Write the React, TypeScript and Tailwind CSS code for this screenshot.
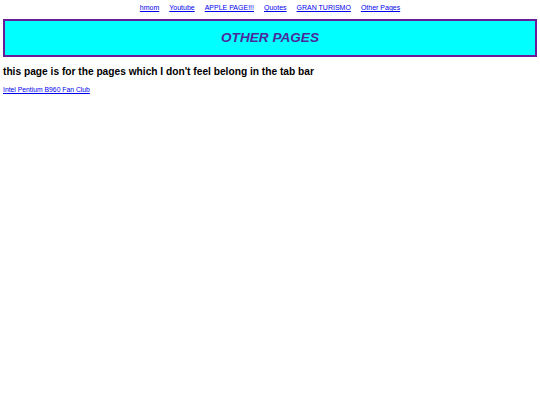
const navLinks = ["hmom", "Youtube", "APPLE PAGE!!!", "Quotes", "GRAN TURISMO", "Other Pages"]

export default function App() {
  return (
    <div className="min-h-screen bg-white text-black" style={{ fontFamily: '"Liberation Sans", Arial, sans-serif' }}>
      <nav className="flex justify-center gap-[10px] pt-[3px] text-[7px] leading-[10px]">
        {navLinks.map((link) => (
          <a key={link} href="#" className="text-[#0000ee] underline">
            {link}
          </a>
        ))}
      </nav>

      <div className="mx-[3px] mt-[6px] border-[2.5px] border-[#6a1b9a] bg-[#00ffff] h-[38px] flex items-center justify-center">
        <h1 className="text-[13.6px] font-bold italic text-[#4b2a9e]">OTHER PAGES</h1>
      </div>

      <h2 className="mx-[3px] mt-[8px] text-[10.2px] font-bold leading-[14px]">
        this page is for the pages which I don't feel belong in the tab bar
      </h2>

      <div className="mx-[3px] mt-[6px] text-[6.8px] leading-[10px]">
        <a href="#" className="text-[#0000ee] underline">
          Intel Pentium B960 Fan Club
        </a>
      </div>
    </div>
  )
}
